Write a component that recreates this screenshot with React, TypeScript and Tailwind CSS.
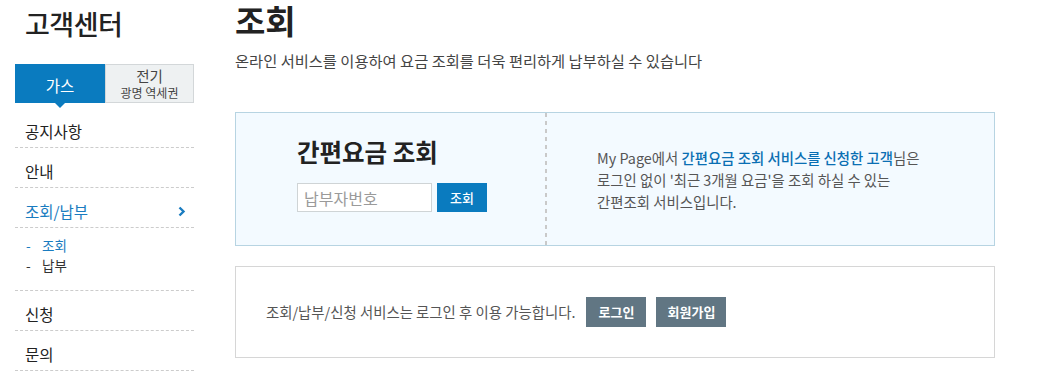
import React from "react";

const font = { fontFamily: '"Noto Sans CJK KR", "Noto Sans", sans-serif' };

function MenuItem({ label, active }: { label: string; active?: boolean }) {
  return (
    <li className="border-b border-dashed border-[#cccccc] h-[40px] pl-[10px] pr-[8px] pt-[13px] flex items-start justify-between">
      <span className={`text-[15.5px] leading-[20px] ${active ? "text-[#1a7cc0]" : "text-[#222222]"}`}>{label}</span>
      {active && (
        <svg width="8" height="11" viewBox="0 0 8 11" className="mt-[5px]">
          <path d="M1.5 1.5 L5.5 5.5 L1.5 9.5" stroke="#1a7cc0" strokeWidth="2.4" fill="none" />
        </svg>
      )}
    </li>
  );
}

export default function App() {
  return (
    <div className="w-[1047px] h-[372px] bg-white overflow-hidden flex" style={font}>
      {/* Sidebar */}
      <aside className="ml-[15px] w-[179px] shrink-0">
        <h2 className="mt-[6px] pl-[10px] text-[27px] leading-[36px] text-[#222222] font-medium tracking-[-0.5px]">고객센터</h2>
        <div className="mt-[22px] flex h-[39px]">
          <div className="relative w-[90px] bg-[#0a7bbf] flex items-center justify-center">
            <span className="text-white text-[15.5px] leading-[20px] mt-[2px]">가스</span>
            <span className="absolute left-[40px] top-[39px] w-0 h-0 border-l-[5px] border-r-[5px] border-t-[5px] border-l-transparent border-r-transparent border-t-[#0a7bbf]" />
          </div>
          <div className="w-[89px] bg-[#eef1f2] border border-[#d3d7d9] flex flex-col items-center justify-center">
            <span className="text-[14.5px] leading-[18px] text-[#444444]">전기</span>
            <span className="text-[12px] leading-[16px] text-[#444444]">광명 역세권</span>
          </div>
        </div>
        <ul className="mt-[5px]">
          <MenuItem label="공지사항" />
          <MenuItem label="안내" />
          <MenuItem label="조회/납부" active />
          <li className="border-b border-dashed border-[#cccccc] pt-[7px] pb-[15px] pl-[11px]">
            <div className="flex text-[13.5px] leading-[20px] text-[#1a7cc0]">
              <span className="w-[16px]">-</span>
              <span>조회</span>
            </div>
            <div className="flex text-[13.5px] leading-[20px] text-[#333333]">
              <span className="w-[16px]">-</span>
              <span>납부</span>
            </div>
          </li>
          <MenuItem label="신청" />
          <MenuItem label="문의" />
        </ul>
      </aside>

      {/* Main */}
      <main className="ml-[41px] w-[760px] shrink-0">
        <h1 className="text-[33px] leading-[42px] font-bold text-[#222222] -mt-[1px]">조회</h1>
        <p className="mt-[9px] text-[15.3px] leading-[20px] text-[#444444]">
          온라인 서비스를 이용하여 요금 조회를 더욱 편리하게 납부하실 수 있습니다
        </p>

        <section className="mt-[42px] h-[134px] border border-[#b7d4e2] bg-[#f3faff] flex">
          <div className="w-[309px] pl-[61px] pt-[24px]">
            <h3 className="text-[24.5px] leading-[30px] font-bold text-[#222222]">간편요금 조회</h3>
            <div className="mt-[16px] flex gap-[5px]">
              <input
                placeholder="납부자번호"
                className="w-[135px] h-[29px] border border-[#cfd4d6] bg-white px-[6px] text-[16px] text-[#333] placeholder:text-[#9a9a9a] outline-none"
                style={font}
              />
              <button className="w-[50px] h-[29px] bg-[#0a7bbf] text-white text-[13px] font-medium">조회</button>
            </div>
          </div>
          <div className="w-[2px] bg-[repeating-linear-gradient(to_bottom,#c9c9c9_0px,#c9c9c9_4px,transparent_4px,transparent_8px)]" />
          <div className="flex-1 pl-[50px] flex items-center">
            <p className="text-[14.4px] leading-[22px] text-[#555555] mt-[2px]">
              My Page에서 <span className="text-[#0a6fb3] font-medium">간편요금 조회 서비스를 신청한 고객</span>님은
              <br />
              로그인 없이 '최근 3개월 요금'을 조회 하실 수 있는
              <br />
              간편조회 서비스입니다.
            </p>
          </div>
        </section>

        <section className="mt-[20px] h-[92px] border border-[#d6d6d6] bg-white flex items-center pl-[30px]">
          <span className="text-[14.4px] leading-[20px] text-[#555555]">조회/납부/신청 서비스는 로그인 후 이용 가능합니다.</span>
          <button className="ml-[11px] w-[60px] h-[30px] bg-[#617683] text-white text-[13px] font-bold">로그인</button>
          <button className="ml-[10px] w-[70px] h-[30px] bg-[#617683] text-white text-[13px] font-bold">회원가입</button>
        </section>
      </main>
    </div>
  );
}
